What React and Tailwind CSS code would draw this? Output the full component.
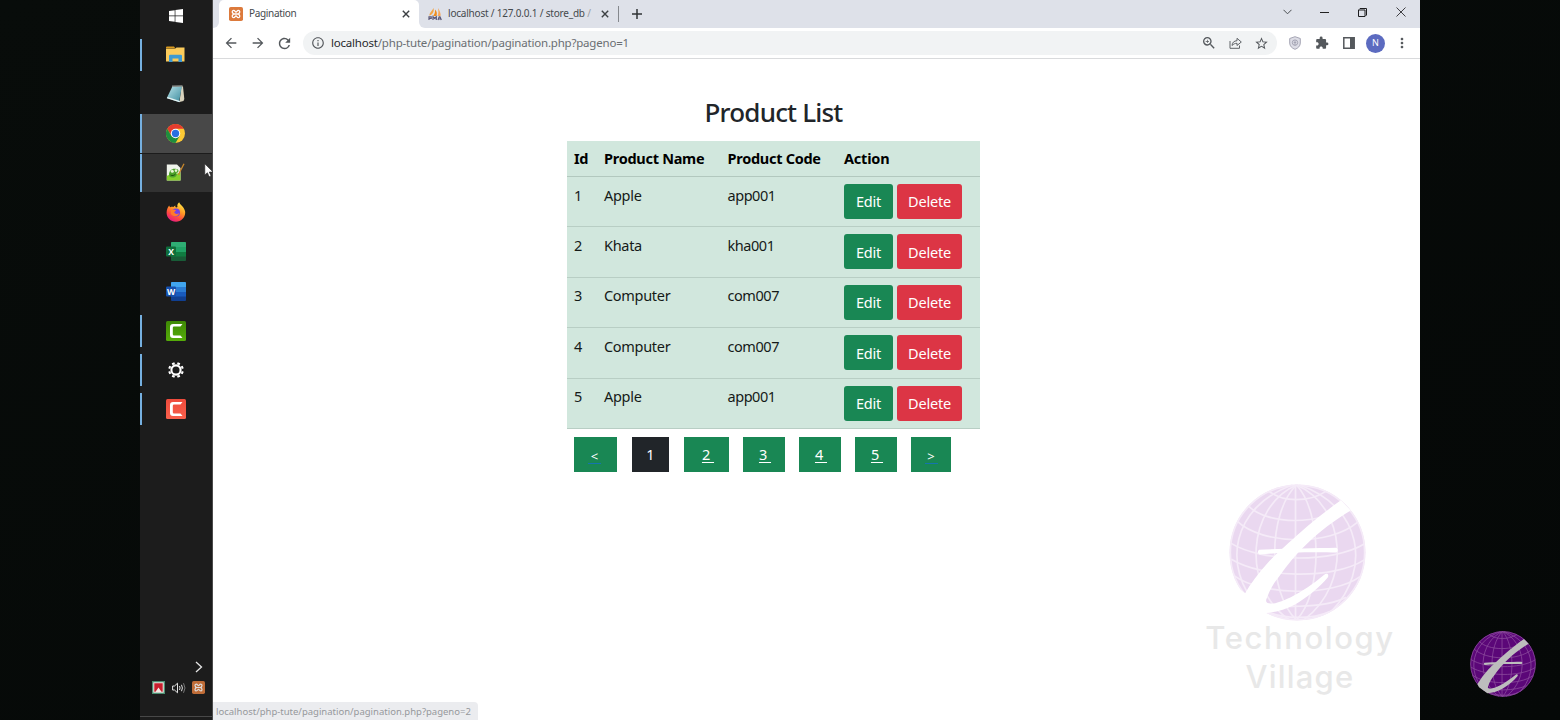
import React from "react";
import {
  MdArrowBack,
  MdArrowForward,
  MdRefresh,
  MdZoomIn,
  MdInfoOutline,
  MdStarBorder,
  MdExtension,
  MdMoreVert,
} from "react-icons/md";

function Globe({ className, sphere, lines, swoosh }) {
  return (
    <svg className={className} viewBox="120 43 410 410" fill="none">
      <circle cx="325" cy="248" r="203" fill={sphere} />
      <g stroke={lines} strokeWidth="5">
        <circle cx="325" cy="248" r="201" />
        <path d="M319 45V450" />
        <path d="M322 46C235 130 235 370 322 450M322 46C400 130 400 370 322 450" />
        <path d="M322 46C175 110 155 350 300 449M322 46C470 110 490 340 345 449" />
        <path d="M310 46C130 110 95 290 210 415M330 46C520 110 545 300 430 420" />
        <path d="M240 65C280 98 360 98 410 65" />
        <path d="M178 108C230 165 400 170 462 105" />
        <path d="M145 155C220 225 420 230 504 158" />
        <path d="M125 220C220 278 430 280 526 222" />
        <path d="M127 268C220 325 430 330 525 270" />
        <path d="M136 318C220 378 430 380 512 320" />
        <path d="M190 390C250 418 410 415 470 382M235 425C285 448 370 448 420 425" />
      </g>
      <g fill={swoosh}>
        <path d="M455 92C410 124 370 155 335 187C300 218 262 252 235 280C208 310 185 340 166 374L176 392L228 429C260 428 290 418 315 405C352 384 392 352 416 322C420 312 412 309 404 315C372 342 340 363 305 382C280 394 258 402 245 401C230 400 229 394 233 385C242 360 255 338 270 320C295 284 322 250 355 220C390 186 435 152 484 122Z" />
        <path d="M118 330L168 370L235 428L195 450L120 400Z" fill={swoosh === "#ffffff" ? "#ffffff" : "none"} />
        <path d="M210 240C270 236 370 236 440 234C447 236 447 246 440 248C370 246 270 248 212 254C205 251 205 244 210 240Z" />
      </g>
    </svg>
  );
}

function XamppIcon({ className }) {
  return (
    <svg className={className} viewBox="0 0 14 14">
      <rect width="14" height="14" rx="1.8" fill="#dc7a3c" />
      <path
        d="M4.600 3.400C3 3.400 2.800 5.400 4 6.200V7.800C2.800 8.600 3 10.600 4.600 10.600C6.200 10.600 6 9 7 9S7.800 10.600 9.400 10.600C11 10.600 11.200 8.600 10 7.800V6.200C11.200 5.400 11 3.400 9.400 3.400C7.800 3.400 8 5 7 5S6.200 3.400 4.600 3.400ZM4.500 7H9.500"
        fill="none"
        stroke="#fff"
        strokeWidth="1.300"
      />
    </svg>
  );
}

function PmaIcon() {
  return (
    <svg className="h-[14px] w-[14px]" viewBox="0 0 14 14">
      <path d="M5.500 1C6.200 4 5.500 7 1.500 8.800C1 6 3.800 4.500 5.500 1Z" fill="#f3a548" />
      <path d="M7 2.500C9 4.500 9.500 7 8.200 9H5C6.800 7 7.200 5 7 2.500Z" fill="#f08c1c" />
      <path d="M10 1C12 4 13 7 12.500 9H9.500C10.500 7 10.600 4.500 10 1Z" fill="#f7a75a" />
      <path
        d="M1 13V9.800H3.200V11.500H1M5 13V9.800L6.700 11.500L8.300 9.800V13M10 13L11.200 9.800H12L13.300 13M10.500 12H13"
        fill="none"
        stroke="#5b5878"
        strokeWidth="1.200"
      />
    </svg>
  );
}

function WindowsIcon() {
  return (
    <svg className="mt-[2px] h-[14px] w-[14px]" viewBox="0 0 14 14" fill="#fff">
      <path d="M0 2L5.700 1.200V6.600H0ZM6.400 1.100L14 0V6.600H6.400ZM0 7.300H5.700V12.800L0 12ZM6.400 7.300H14V14L6.400 12.900Z" />
    </svg>
  );
}

function FolderIcon() {
  return (
    <svg className="h-[17px] w-[19px]" viewBox="0 0 19 17">
      <path d="M0 1.500Q0 .5 1 .5H8L9.500 2.500H0Z" fill="#d99a1f" />
      <path d="M0 2.800H9L10.500 1.500H18.500V15.500H0Z" fill="#fbcb5b" />
      <path d="M3 16V10Q3 8.800 4.200 8.800H14.800Q16 8.800 16 10V16H12.500V12.500H6.500V16Z" fill="#3d9ad3" />
    </svg>
  );
}

function NotepadIcon() {
  return (
    <svg className="h-[18px] w-[19px]" viewBox="0 0 19 18">
      <path d="M15.500 1L17 1.500L18.300 14L17.500 16L13.500 17Z" fill="#d9d3bd" />
      <path d="M6.500 1.300L16 1L13 17L.8 13Z" fill="url(#pad)" />
      <path d="M.8 13.300L13.500 17.300L14 16L1.500 12Z" fill="#e5f3f4" />
      <path d="M6 1.300L16.500 1" stroke="#8a8f8c" strokeWidth="1.400" />
      <defs>
        <linearGradient id="pad" x1="0" y1="0" x2="1" y2="1">
          <stop stopColor="#b9e3ea" />
          <stop offset="1" stopColor="#3b8b9d" />
        </linearGradient>
      </defs>
    </svg>
  );
}

function ChromeIcon() {
  return (
    <svg className="h-[19px] w-[19px]" viewBox="0 0 48 48">
      <circle cx="24" cy="24" r="24" fill="#fcc934" />
      <path d="M24 24L13.600 30L3.200 12A24 24 0 0 1 44.800 12H24Z" fill="#e33b2e" />
      <path d="M3.200 12L13.600 30L24 36L34.400 30L24 48A24 24 0 0 1 3.200 12Z" fill="#1e8e3e" />
      <circle cx="24" cy="24" r="12" fill="#fff" />
      <circle cx="24" cy="24" r="9.300" fill="#2a6fe0" />
    </svg>
  );
}

function EditorIcon() {
  return (
    <svg className="h-[19px] w-[19px]" viewBox="0 0 19 19">
      <path d="M.8 1.500H11L14.500 5V17.500H.8Z" fill="#f0f4ec" />
      <path d="M.8 13C4 11 10 11.500 14.500 9.500V17.500H.8Z" fill="#86cf2c" />
      <path d="M3 12C3 7.500 6 5 10.500 6C13.500 6.500 13 10 10 10C12 11.500 10 15 6 14.500C4 14.500 3 13.500 3 12Z" fill="#4da32a" />
      <circle cx="6.300" cy="8.300" r="1.500" fill="#e8f5d2" />
      <circle cx="10" cy="7.600" r="1.300" fill="#e8f5d2" />
      <path d="M4.500 12C6.500 13 8 12.500 9.500 11" stroke="#1c4d0d" fill="none" />
      <path d="M18 .8L13 10.500L12.600 12" stroke="#c9872a" strokeWidth="1.300" fill="none" />
    </svg>
  );
}

function FirefoxIcon() {
  return (
    <svg className="h-[20px] w-[20px]" viewBox="0 0 20 20">
      <defs>
        <linearGradient id="fox" x1=".8" y1="0" x2=".25" y2="1">
          <stop stopColor="#fff04a" />
          <stop offset=".4" stopColor="#ff9a25" />
          <stop offset=".7" stopColor="#ff4a40" />
          <stop offset="1" stopColor="#e3168a" />
        </linearGradient>
      </defs>
      <path
        d="M3.200 3.500C3.500 4.500 4 5 4.300 5.200C5.500 4.700 6.500 4.800 7.400 5.100C8.200 3.900 8.800 3.600 9.500 3.400C9 4.300 9.200 5 10.300 5.600L11.500 5C10.800 3 12 1.300 13.200 .3C13.500 2.500 18 4.500 19 9C20.200 15 15.500 19.700 10 19.700C4.500 19.700 .5 15.500 .6 10.500C.7 7.500 1.500 5.500 3.200 3.500Z"
        fill="url(#fox)"
      />
      <circle cx="10" cy="10.500" r="4" fill="#7542e5" />
      <path d="M5 8C6.500 7 8 7.500 10 8.200C9.500 9.300 8.500 9.300 8.200 10.600C9.500 12.500 12 12 13 11C12.500 15 6.500 15.500 4.800 11.500Z" fill="#ff7a2a" />
    </svg>
  );
}

function OfficeIcon({ letter, tones, box }) {
  return (
    <svg className="h-[19px] w-[20px]" viewBox="0 0 20 19">
      <rect x="5" width="15" height="19" rx="1" fill={tones[0]} />
      <path d="M5 1Q5 0 6 0H19Q20 0 20 1V5H5Z" fill={tones[1]} />
      <rect x="5" y="5" width="15" height="5" fill={tones[2]} />
      <rect x="5" y="10" width="15" height="4.500" fill={tones[3]} />
      <rect x="0" y="4.500" width="10" height="10" rx="1" fill={box} />
      <text x="5" y="12.700" textAnchor="middle" fill="#fff" fontSize="8.500" fontWeight="700" fontFamily="Open Sans, sans-serif">
        {letter}
      </text>
    </svg>
  );
}

function CamtasiaIcon({ from, to, id }) {
  return (
    <svg className="h-[20px] w-[20px]" viewBox="0 0 20 20">
      <defs>
        <linearGradient id={id} x1="0" y1="0" x2="0" y2="1">
          <stop stopColor={from} />
          <stop offset="1" stopColor={to} />
        </linearGradient>
      </defs>
      <rect width="20" height="20" rx="1.500" fill={`url(#${id})`} />
      <path d="M16.500 3H7Q4 3 4 6V14Q4 17 7 17H16.500L14.500 14.600H8Q6.800 14.600 6.800 13.300V6.700Q6.800 5.400 8 5.400H14.500Z" fill="#fff" />
    </svg>
  );
}

function GearIcon() {
  return (
    <svg className="h-[16px] w-[16px]" viewBox="0 0 16 16" fill="none" stroke="#fff">
      <circle cx="8" cy="8" r="4.600" strokeWidth="2.100" />
      <g strokeWidth="2.800">
        <path d="M10.200 2.700L11 .8M13.300 5.800L15.200 5M13.300 10.200L15.200 11M10.200 13.300L11 15.200M5.800 13.300L5 15.200M2.700 10.200L.8 11M2.700 5.800L.8 5M5.800 2.700L5 .8" />
      </g>
    </svg>
  );
}

const taskbar = [
  { icon: <WindowsIcon /> },
  { icon: <FolderIcon />, running: true },
  { icon: <NotepadIcon /> },
  { icon: <ChromeIcon />, running: true, fill: "bg-[#484848]" },
  { icon: <EditorIcon />, running: true, fill: "bg-[#323232]" },
  { icon: <FirefoxIcon /> },
  { icon: <OfficeIcon letter="X" tones={["#185c37", "#2fae74", "#21a366", "#107c41"]} box="#0f6e3b" /> },
  { icon: <OfficeIcon letter="W" tones={["#103f91", "#41a5ee", "#2b7cd3", "#185abd"]} box="#1650ad" /> },
  { icon: <CamtasiaIcon id="camGreen" from="#3f8a06" to="#55ab09" />, running: true },
  { icon: <GearIcon />, running: true },
  { icon: <CamtasiaIcon id="camRed" from="#ee4b3c" to="#f8604c" />, running: true },
];

function Taskbar() {
  return (
    <aside className="flex h-[720px] w-[73px] shrink-0 flex-col border-r border-[#4a4a4a] bg-[#1c1c1c]">
      <div className="-mt-[4.500px] flex flex-col">
        {taskbar.map((item, i) => (
          <div key={i} className="flex h-[39.430px] items-center">
            <div
              className={`flex w-full items-center ${item.fill ? "h-[38.500px] " + item.fill : "h-[32px]"} ${
                item.running ? "border-l-2 border-[#76b0e0]" : "border-l-2 border-transparent"
              }`}
            >
              <div className="flex w-[67.500px] justify-center">{item.icon}</div>
            </div>
          </div>
        ))}
      </div>
      <div className="mt-auto flex h-[59px] flex-col">
        <svg className="ml-[54px] h-[12px] w-[9px] shrink-0" viewBox="0 0 9 12" fill="none" stroke="#e6e6e6" strokeWidth="1.300">
          <path d="M2 1L7.500 6L2 11" />
        </svg>
        <div className="mt-[8px] flex items-center pl-[12px]">
          <svg className="h-[13px] w-[13px]" viewBox="0 0 13 13">
            <rect width="13" height="13" fill="#4c8f72" />
            <rect x="1.300" y="1.300" width="10.400" height="10.400" fill="#f4e9e6" />
            <path d="M2.300 2.300H10.700V10.700H9.500L6.500 6.500L3.500 10.700H2.300Z" fill="#c81f2d" />
          </svg>
          <svg className="ml-[7px] h-[12px] w-[14px]" viewBox="0 0 14 12" fill="none" stroke="#e3e3e3" strokeWidth="1">
            <path d="M.6 4H2.500L5.500 1.200V10.800L2.500 8H.6ZM7.500 4Q8.700 6 7.500 8M9.500 2.800Q11.300 6 9.500 9.200" />
            <path d="M11.500 1.200Q14.500 6 11.500 10.800" stroke="#777" />
          </svg>
          <XamppIcon className="ml-[6px] h-[13px] w-[13px] opacity-85" />
        </div>
        <div className="mt-[22px] h-px bg-[#484848]" />
      </div>
    </aside>
  );
}

function CloseX({ className }) {
  return (
    <svg className={className} viewBox="0 0 8 8" stroke="#3c4043" strokeWidth="1.400">
      <path d="M.8 .8L7.200 7.200M7.200 .8L.8 7.200" />
    </svg>
  );
}

function TabStrip() {
  return (
    <div className="flex h-[28px] bg-[#dee1e9]">
      <div className="w-[6px] bg-white">
        <div className="h-full w-full rounded-br-[6px] bg-[#dee1e9]" />
      </div>
      <div className="flex h-full w-[200px] items-center rounded-t-[5px] bg-white pl-[10px] pr-[9px]">
        <XamppIcon className="mb-px h-[14px] w-[14px]" />
        <span className="ml-[6px] pb-[2px] text-[10px] tracking-[-0.320px] text-[#45494d]">Pagination</span>
        <CloseX className="ml-auto h-[8px] w-[8px]" />
      </div>
      <div className="flex h-full flex-1 bg-white">
        <div className="flex h-full flex-1 items-center rounded-bl-[6px] bg-[#dee1e9]">
          <div className="ml-[9px] flex">
            <PmaIcon />
          </div>
          <div className="ml-[6px] w-[144px] whitespace-nowrap pb-[2px] text-[10px] tracking-[-0.200px] text-[#45494d]">
            localhost / 127.0.0.1 / store_db <span className="text-[#9a9da3]">/</span>
          </div>
          <CloseX className="ml-[9px] h-[8px] w-[8px]" />
          <div className="ml-[9px] h-[16px] w-px bg-[#85888d]" />
          <svg className="ml-[13px] h-[10px] w-[10px]" viewBox="0 0 10 10" stroke="#303336" strokeWidth="1.500">
            <path d="M5 0V10M0 5H10" />
          </svg>
          <svg className="mb-[4px] ml-auto h-[6px] w-[9px]" viewBox="0 0 9 6" fill="none" stroke="#4b4e52" strokeWidth="1">
            <path d="M.5 .8L4.500 4.800L8.500 .8" />
          </svg>
          <div className="mb-[4px] ml-[28px] h-px w-[9px] bg-[#222]" />
          <svg className="mb-[4px] ml-[29px] h-[9px] w-[9px]" viewBox="0 0 9 9" fill="none" stroke="#1d1d1f" strokeWidth="1">
            <path d="M.5 2.500H6.500V8.500H.5ZM2.500 2.500V.5H8.500V6.500H6.500" stroke="none" />
            <path d="M.5 2H7V8.500H.5ZM1 1.500L2 .5H8.500V7L7.500 8" />
          </svg>
          <svg className="mb-[4px] ml-[29px] mr-[14px] h-[10px] w-[10px]" viewBox="0 0 10 10" stroke="#2d2d30" strokeWidth=".9">
            <path d="M.5 .5L9.500 9.500M9.500 .5L.5 9.500" />
          </svg>
        </div>
      </div>
    </div>
  );
}

function Toolbar() {
  return (
    <div className="flex h-[31px] items-center border-b border-[#d9dadc] bg-white pl-[10px] text-[#54585c]">
      <MdArrowBack className="h-[16px] w-[16px]" />
      <MdArrowForward className="ml-[11px] h-[16px] w-[16px]" />
      <MdRefresh className="ml-[10px] h-[17px] w-[17px]" />
      <div className="ml-[10px] flex h-[24px] w-[974px] items-center rounded-full bg-[#f1f3f4] pl-[8px] pr-[8px]">
        <MdInfoOutline className="h-[14px] w-[14px]" />
        <span className="ml-[6px] whitespace-nowrap text-[11.500px] tracking-[-0.200px] text-[#6a6e72]">
          <span className="text-[#26282b]">localhost</span>/php-tute/pagination/pagination.php?pageno=1
        </span>
        <MdZoomIn className="ml-auto h-[16px] w-[16px]" />
        <svg className="ml-[12px] h-[12px] w-[13px]" viewBox="0 0 13 12" fill="none" stroke="#5f6367" strokeWidth="1">
          <path d="M1 4V11.300H10.500V8.500" />
          <path d="M3 8.500C3.200 5.500 5 3.900 8 3.700V1.300L12.300 5L8 8.500V6.300C6 6.300 4.500 6.900 3 8.500Z" strokeLinejoin="round" />
        </svg>
        <MdStarBorder className="ml-[12px] h-[15px] w-[15px]" />
      </div>
      <svg className="ml-[12px] h-[14px] w-[12px]" viewBox="0 0 12 14" fill="#dddde6" stroke="#a5a5b4">
        <path d="M6 .7L11.300 2.500V7C11.300 10 9 12.300 6 13.300C3 12.300 .7 10 .7 7V2.500Z" />
        <circle cx="6" cy="6.600" r="2.700" />
        <path d="M6 4.500V9.500M4.700 6.500H7.300" />
      </svg>
      <MdExtension className="ml-[14px] h-[14px] w-[14px]" />
      <svg className="ml-[14px] h-[12px] w-[12px]" viewBox="0 0 12 12">
        <path d="M.8 .8H11.200V11.200H.8Z" fill="none" stroke="#54585c" strokeWidth="1.500" />
        <path d="M7 1H11V11H7Z" fill="#54585c" />
      </svg>
      <div className="ml-[11px] flex h-[19px] w-[19px] items-center justify-center rounded-full bg-[#5c6bc0] text-[9px] text-white">
        N
      </div>
      <MdMoreVert className="ml-[9px] h-[16px] w-[16px]" />
    </div>
  );
}

const products = [
  [1, "Apple", "app001"],
  [2, "Khata", "kha001"],
  [3, "Computer", "com007"],
  [4, "Computer", "com007"],
  [5, "Apple", "app001"],
];

const pages = [
  { label: "<", size: "w-[43px] pr-[2px]", arrow: true },
  { label: "1", size: "w-[37px] ml-[15px]", current: true },
  { label: "2\u00a0", size: "w-[45px] ml-[15px] pl-[3px]" },
  { label: "3\u00a0", size: "w-[42px] ml-[14px] pl-[2px]" },
  { label: "4\u00a0", size: "w-[42px] ml-[14px] pl-[2px]" },
  { label: "5\u00a0", size: "w-[42px] ml-[14px] pl-[2px]" },
  { label: ">", size: "w-[40px] ml-[14px]", arrow: true },
];

function ProductPage() {
  return (
    <main className="ml-[354px] flex w-[413px] flex-col pt-[35px]">
      <h1 className="h-[47px] text-center text-[26px] font-medium leading-[37px] tracking-[-0.800px] text-[#212529]">
        Product List
      </h1>
      <div className="bg-[#d1e7dd] text-[14.500px] text-[#151a18]">
        <div className="grid h-[36px] grid-cols-[30px_123.500px_116.500px_136px] items-center border-b border-[#b2c8be] pl-[7px] font-bold tracking-[-0.280px] text-black">
          <div>Id</div>
          <div>Product Name</div>
          <div>Product Code</div>
          <div className="tracking-[-0.200px]">Action</div>
        </div>
        {products.map(([id, name, code]) => (
          <div
            key={id}
            className="grid h-[50.450px] grid-cols-[30px_123.500px_116.500px_136px] border-b border-[#b8cec4] pl-[7px] pt-[7px] leading-[22px] tracking-[-0.350px]"
          >
            <div className="-mt-[0.500px]">{id}</div>
            <div className="-mt-[0.500px] tracking-[-0.300px]">{name}</div>
            <div className="-mt-[0.500px] tracking-[-0.450px]">{code}</div>
            <div className="flex gap-[4px] tracking-[-0.200px] text-white">
              <button className="h-[35px] w-[49px] rounded-[3px] bg-[#198754] pb-[0.500px]">Edit</button>
              <button className="h-[35px] w-[65px] rounded-[3px] bg-[#dc3545] pb-[0.500px]">Delete</button>
            </div>
          </div>
        ))}
      </div>
      <nav className="mt-[7.400px] flex h-[35px] pl-[7px] text-[14.500px] text-white">
        {pages.map((p) => (
          <a
            key={p.label}
            className={`flex items-center justify-center pt-[2px] ${p.size} ${p.current ? "bg-[#212529]" : "bg-[#198754]"}`}
          >
            {p.arrow ? (
              <span className="mt-[2px] flex w-[13px] justify-center border-b border-[#1474ae] text-[13px] leading-[14px]">
                {p.label}
              </span>
            ) : (
              <span className={p.current ? "" : "underline underline-offset-2"}>{p.label}</span>
            )}
          </a>
        ))}
      </nav>
    </main>
  );
}

export default function App() {
  return (
    <div className="relative flex h-[720px] w-[1560px] overflow-hidden bg-linear-to-br from-[#080c0a] to-[#050807] pl-[140px] font-['Noto_Sans',sans-serif]">
      <Taskbar />
      <div className="relative flex h-full w-[1207px] flex-col bg-white">
        <TabStrip />
        <Toolbar />
        <ProductPage />
        <div className="absolute bottom-0 left-0 flex h-[18px] w-[265px] items-center whitespace-nowrap rounded-tr-[4px] bg-[#ebecef] pl-[3px] pt-[2px] text-[9.500px] text-[#96989c]">
          localhost/php-tute/pagination/pagination.php?pageno=2
        </div>
        <div className="absolute left-[987px] top-[484px] flex w-[200px] flex-col items-center font-['Inter',sans-serif] text-[31px] font-medium leading-[39px] text-[#e8e8e8]">
          <Globe className="-ml-[5px] h-[137px] w-[137px]" sphere="#ead8f0" lines="#f5ebf8" swoosh="#ffffff" />
          <div className="-mt-[3px] tracking-[1.600px]">Technology</div>
          <div className="tracking-[1.200px]">Village</div>
        </div>
      </div>
      <Globe className="absolute left-[1470px] top-[631px] h-[66px] w-[66px]" sphere="#5b0778" lines="#8a4a9c" swoosh="#bdbdbd" />
      <svg className="absolute left-[204px] top-[163px] h-[15px] w-[10px]" viewBox="0 0 10 15">
        <path d="M.8 .8V12L3.400 9.700L5.200 13.700L7 12.900L5.300 9H9Z" fill="#fff" stroke="#222" strokeWidth=".6" />
      </svg>
    </div>
  );
}
